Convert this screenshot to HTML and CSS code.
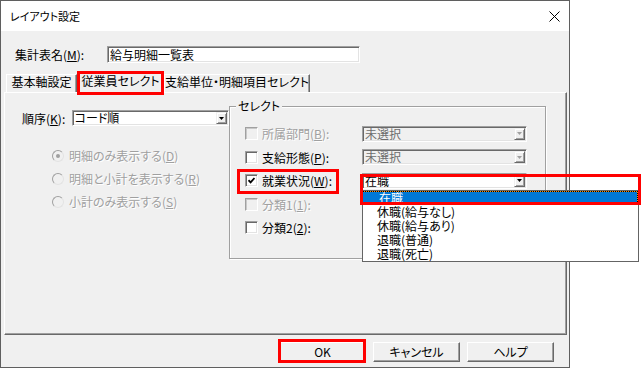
FILE: index.html
```html
<!DOCTYPE html>
<html lang="ja">
<head>
    <meta charset="UTF-8">
    <title>レイアウト設定</title>
    <link rel="stylesheet" href="styles.css">
</head>
<body>
    <div class="dialog">
        <div class="titlebar">
            <span class="title">レイアウト設定</span>
            <svg class="close" width="11" height="11" viewBox="0 0 11 11"><path d="M0.5 0.5L10.5 10.5M10.5 0.5L0.5 10.5" stroke="#000" stroke-width="1"/></svg>
        </div>

        <div class="content">
            <div class="name-row">
                <span class="name-label">集計表名(<u>M</u>):</span>
                <div class="textbox">給与明細一覧表</div>
            </div>

            <div class="tabs">
                <div class="tab tab-base">基本軸設定</div>
                <div class="tab tab-staff active">従業員セレクト</div>
                <div class="tab tab-items">支給単位・明細項目セレクト</div>
            </div>

            <div class="panel">
                <div class="left-col">
                    <div class="order-row">
                        <span class="order-label">順序(<u>K</u>):</span>
                        <div class="combo order-combo">
                            <span class="combo-text">コード順</span>
                            <span class="combo-btn"><svg width="5" height="3"><path d="M0 0h5L2.5 3z"/></svg></span>
                        </div>
                    </div>
                    <div class="radios">
                        <div class="radio-row disabled"><span class="radio checked"></span><span>明細のみ表示する(<u>D</u>)</span></div>
                        <div class="radio-row disabled"><span class="radio"></span><span>明細と小計を表示する(<u>R</u>)</span></div>
                        <div class="radio-row disabled"><span class="radio"></span><span>小計のみ表示する(<u>S</u>)</span></div>
                    </div>
                </div>

                <div class="group">
                    <div class="group-title">セレクト</div>
                    <div class="select-rows">
                        <div class="select-row disabled">
                            <span class="check"></span>
                            <span class="check-label">所属部門(<u>B</u>):</span>
                            <div class="combo off">
                                <span class="combo-text">未選択</span>
                                <span class="combo-btn"><svg width="5" height="3"><path d="M0 0h5L2.5 3z"/></svg></span>
                            </div>
                        </div>
                        <div class="select-row">
                            <span class="check"></span>
                            <span class="check-label">支給形態(<u>P</u>):</span>
                            <div class="combo off">
                                <span class="combo-text">未選択</span>
                                <span class="combo-btn"><svg width="5" height="3"><path d="M0 0h5L2.5 3z"/></svg></span>
                            </div>
                        </div>
                        <div class="select-row">
                            <span class="check"><svg width="7" height="7" viewBox="0 0 7 7"><path d="M0.5 3.2L2.6 5.4L6.5 1" stroke="#000" stroke-width="1.8" fill="none"/></svg></span>
                            <span class="check-label">就業状況(<u>W</u>):</span>
                            <div class="combo-wrap">
                                <div class="combo">
                                    <span class="combo-text">在職</span>
                                    <span class="combo-btn"><svg width="5" height="3"><path d="M0 0h5L2.5 3z"/></svg></span>
                                </div>
                                <div class="dropdown">
                                    <div class="dropdown-item selected">在職</div>
                                    <div class="dropdown-item">休職(給与なし)</div>
                                    <div class="dropdown-item">休職(給与あり)</div>
                                    <div class="dropdown-item">退職(普通)</div>
                                    <div class="dropdown-item">退職(死亡)</div>
                                </div>
                            </div>
                        </div>
                        <div class="select-row disabled">
                            <span class="check"></span>
                            <span class="check-label">分類1(<u>1</u>):</span>
                        </div>
                        <div class="select-row">
                            <span class="check"></span>
                            <span class="check-label">分類2(<u>2</u>):</span>
                        </div>
                    </div>
                </div>
            </div>

            <div class="buttons">
                <div class="btn">OK</div>
                <div class="btn">キャンセル</div>
                <div class="btn">ヘルプ</div>
            </div>
        </div>

        <!-- red highlight marks -->
        <div class="mark mark-tab"></div>
        <div class="mark mark-check"></div>
        <div class="mark mark-combo"></div>
        <div class="mark mark-ok"></div>
    </div>
</body>
</html>
```

FILE: styles.css
```css
body {
    margin: 0;
    background: #fff;
    font-family: "Noto Sans CJK JP", sans-serif;
    font-size: 12px;
    color: #000;
    font-feature-settings: "palt";
}
u {
    text-underline-offset: 1px;
}
.dialog {
    position: relative;
    width: 570px;
    height: 368px;
    box-sizing: border-box;
    border: 1px solid #5f5f5f;
    background: #f0f0f0;
}
.titlebar {
    height: 30px;
    background: #fff;
    display: flex;
    align-items: center;
    justify-content: space-between;
    padding: 0 9px;
}
.title {
    font-size: 11px;
}
.content {
    padding: 15px 15px 0 3px;
}
.name-row {
    display: flex;
    align-items: center;
    height: 17px;
    padding-left: 11px;
}
.name-label {
    width: 92px;
}
.textbox {
    width: 253px;
    height: 17px;
    box-sizing: border-box;
    border: 1px solid;
    border-color: #a0a0a0 #fff #fff #a0a0a0;
    box-shadow: inset 1px 1px 0 #696969, inset -1px -1px 0 #e3e3e3;
    background: #fff;
    padding-left: 2px;
    line-height: 15px;
}
.tabs {
    display: flex;
    align-items: flex-end;
    height: 20px;
    margin: 9px 0 0 2px;
}
.tab {
    height: 18px;
    box-sizing: border-box;
    border: 1px solid;
    border-bottom: 0;
    border-color: #fff #696969 transparent #fff;
    box-shadow: inset -1px 0 0 #a0a0a0;
    text-align: center;
    line-height: 14px;
    white-space: nowrap;
}
.tab-base { width: 71px; }
.tab-staff { width: 87px; }
.tab-items { width: 146px; }
.tab.active {
    position: relative;
    z-index: 1;
    height: 22px;
    margin-bottom: -1px;
    background: #f0f0f0;
    line-height: 17px;
}
.panel {
    display: flex;
    width: 563px;
    height: 243px;
    box-sizing: border-box;
    border: 1px solid;
    border-color: #fff #696969 #696969 #fff;
    box-shadow: inset -1px -1px 0 #a0a0a0;
}
.left-col {
    width: 224px;
    box-sizing: border-box;
    padding: 17px 0 0 17px;
}
.order-row {
    display: flex;
    align-items: center;
    height: 16px;
}
.order-label {
    width: 52px;
}
.order-combo {
    width: 134px;
}
.radios {
    margin-top: 18px;
    padding-left: 30px;
}
.radio-row {
    display: flex;
    align-items: center;
    gap: 5px;
    height: 23px;
    white-space: nowrap;
}
.disabled {
    color: #a0a0a0;
    text-shadow: 1px 1px 0 #fff;
}
.radio {
    position: relative;
    width: 12px;
    height: 12px;
    box-sizing: border-box;
    border-radius: 50%;
    border: 1px solid;
    border-color: #a0a0a0 #e3e3e3 #e3e3e3 #a0a0a0;
    background: #f0f0f0;
}
.radio.checked::after {
    content: "";
    position: absolute;
    left: 3px;
    top: 3px;
    width: 4px;
    height: 4px;
    border-radius: 50%;
    background: #a0a0a0;
}
.group {
    width: 317px;
    height: 153px;
    box-sizing: border-box;
    margin-top: 13px;
    border: 1px solid #a0a0a0;
    box-shadow: inset 1px 1px 0 #fff, 1px 1px 0 #fff;
}
.group-title {
    width: max-content;
    margin: -8px 0 0 6px;
    padding: 0 2px;
    background: #f0f0f0;
    line-height: 14px;
}
.select-rows {
    padding: 9px 0 0 15px;
}
.select-row {
    display: flex;
    align-items: center;
    height: 23.5px;
    white-space: nowrap;
}
.check {
    display: flex;
    align-items: center;
    justify-content: center;
    width: 13px;
    height: 13px;
    box-sizing: border-box;
    margin-right: 4px;
    border: 1px solid;
    border-color: #a0a0a0 #fff #fff #a0a0a0;
    box-shadow: inset 1px 1px 0 #696969, inset -1px -1px 0 #e3e3e3;
    background: #fff;
}
.select-row.disabled .check {
    background: #f0f0f0;
    box-shadow: inset 1px 1px 0 #c8c8c8;
}
.check-label {
    width: 100px;
}
.combo {
    display: flex;
    align-items: center;
    width: 165px;
    height: 16px;
    box-sizing: border-box;
    padding: 1px;
    border: 1px solid;
    border-color: #a0a0a0 #fff #fff #a0a0a0;
    box-shadow: inset 1px 1px 0 #696969, inset -1px -1px 0 #e3e3e3;
    background: #fff;
    color: #000;
    text-shadow: none;
}
.combo.off {
    background: #f0f0f0;
    color: #6d6d6d;
}
.combo-text {
    flex: 1;
    padding-left: 1px;
    line-height: 12px;
}
.combo-btn {
    display: flex;
    align-items: center;
    justify-content: center;
    width: 11px;
    height: 12px;
    box-sizing: border-box;
    border: 1px solid;
    border-color: #f0f0f0 #696969 #696969 #f0f0f0;
    box-shadow: inset 1px 1px 0 #fff, inset -1px -1px 0 #a0a0a0;
    background: #f0f0f0;
}
.combo.off .combo-btn svg {
    fill: #a0a0a0;
}
.combo-wrap {
    position: relative;
}
.dropdown {
    position: absolute;
    top: calc(100% + 1px);
    left: 0;
    z-index: 2;
    width: 277px;
    box-sizing: border-box;
    border: 1px solid #646464;
    background: #fff;
}
.dropdown-item {
    height: 14px;
    line-height: 14px;
    padding-left: 14px;
}
.dropdown-item.selected {
    padding-left: 16px;
    color: #fff;
    background:
        repeating-linear-gradient(90deg, #000 0 1px, #ff8c00 1px 2px) top / 100% 1px no-repeat,
        repeating-linear-gradient(180deg, #000 0 1px, #ff8c00 1px 2px) right / 1px 100% no-repeat,
        #0078d7;
}
.buttons {
    display: flex;
    justify-content: flex-end;
    gap: 7px;
    margin-top: 7px;
}
.btn {
    width: 87px;
    height: 20px;
    box-sizing: border-box;
    border: 1px solid;
    border-color: #fff #696969 #696969 #fff;
    box-shadow: inset -1px -1px 0 #a0a0a0;
    background: #f0f0f0;
    text-align: center;
    line-height: 18px;
}
.mark {
    position: absolute;
    z-index: 3;
    box-sizing: border-box;
    border: 3px solid #f00;
}
.mark-tab {
    left: 76px;
    top: 70px;
    width: 87px;
    height: 24px;
}
.mark-check {
    left: 236px;
    top: 168px;
    width: 102px;
    height: 25px;
}
.mark-combo {
    left: 359px;
    top: 173px;
    width: 281px;
    height: 31px;
}
.mark-ok {
    left: 277px;
    top: 338px;
    width: 88px;
    height: 24px;
}
```
